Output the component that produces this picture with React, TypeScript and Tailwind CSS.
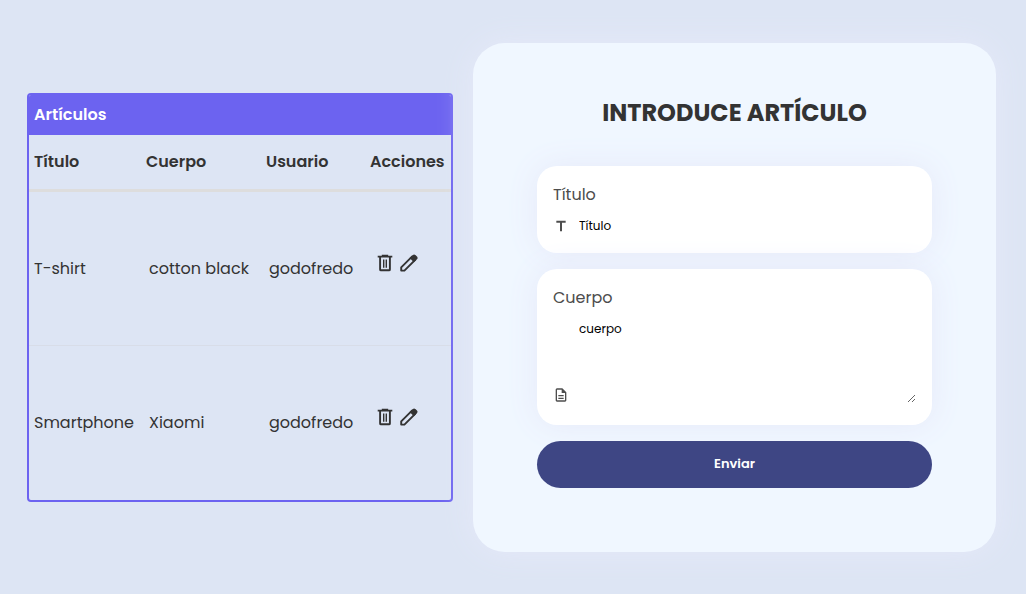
import React from 'react';

const articles = [
  { title: 'T-shirt', body: 'cotton black', user: 'godofredo' },
  { title: 'Smartphone', body: 'Xiaomi', user: 'godofredo' },
];

const icons = {
  title: 'M420-160v-520H200v-120h560v120H540v520H420Z',
  description:
    'M320-240h320v-80H320v80Zm0-160h320v-80H320v80ZM240-80q-33 0-56.5-23.5T160-160v-640q0-33 23.5-56.5T240-880h320l240 240v480q0 33-23.5 56.5T720-80H240Zm280-520v-200H240v640h480v-440H520ZM240-800v200-200 640-640Z',
};

function Icon({ name, className }: { name: keyof typeof icons; className: string }) {
  return (
    <svg viewBox="0 -960 960 960" fill="currentColor" aria-hidden="true" className={className}>
      <path d={icons[name]} />
    </svg>
  );
}

function TrashIcon() {
  return (
    <svg viewBox="0 0 24 24" fill="none" stroke="currentColor" strokeWidth="1.9" aria-hidden="true" className="size-6">
      <path d="M4.7 5.6h14.6M8.8 4.6h6.4" />
      <path d="M7.1 6v12.4q0 .9.9.9h8q.9 0 .9-.9V6" />
      <path strokeWidth="1.4" d="M10.7 8.6v8.2M13.3 8.6v8.2" />
    </svg>
  );
}

function PencilIcon() {
  return (
    <svg viewBox="0 0 24 24" fill="none" stroke="currentColor" strokeWidth="1.9" strokeLinejoin="round" aria-hidden="true" className="size-6">
      <path d="M4.2 19.6v-3.2L15 5.6l3.2 3.2L7.4 19.6z" />
      <path
        fill="currentColor"
        stroke="none"
        d="M12.6 7l3.2-3a1.9 1.9 0 0 1 2.6 0l1.6 1.6a1.9 1.9 0 0 1 0 2.6l-3.1 3.1z"
      />
    </svg>
  );
}

function ArticleTable() {
  return (
    <div className="overflow-hidden rounded border-2 border-[#6c63f0]">
      <table className="w-full table-fixed border-collapse text-left">
        <colgroup>
          <col className="w-[114px]" />
          <col className="w-[120px]" />
          <col className="w-[104px]" />
          <col />
        </colgroup>
        <thead>
          <tr className="h-10 bg-[#6c63f0] text-white">
            <th colSpan={4} className="pl-[5px] font-semibold">Artículos</th>
          </tr>
          <tr className="h-14 border-b-3 border-[#dddddd]">
            <th className="pl-[5px] font-semibold">Título</th>
            <th className="pl-[3px] font-semibold">Cuerpo</th>
            <th className="pl-[3px] font-semibold">Usuario</th>
            <th className="pl-[3px] font-semibold">Acciones</th>
          </tr>
        </thead>
        <tbody>
          {articles.map((a) => (
            <tr key={a.title} className="h-[155px] border-b border-[#d8dde8] last:h-[154px] last:border-b-0">
              <td className="pl-[5px]">{a.title}</td>
              <td className="pl-[6px]">{a.body}</td>
              <td className="pl-[6px]">{a.user}</td>
              <td className="pb-3 pl-[6px]">
                <div className="flex">
                  <button type="button" aria-label="Eliminar"><TrashIcon /></button>
                  <button type="button" aria-label="Editar"><PencilIcon /></button>
                </div>
              </td>
            </tr>
          ))}
        </tbody>
      </table>
    </div>
  );
}

function ArticleForm() {
  return (
    <form
      onSubmit={(e) => e.preventDefault()}
      className="flex flex-col gap-4 rounded-[32px] bg-[#f0f7ff] px-16 pt-[50px] pb-16 shadow-[0_0_32px_#e6e9f9]"
    >
      <h2 className="mb-[17px] text-center text-2xl leading-10 font-bold">INTRODUCE ARTÍCULO</h2>
      <div className="rounded-[20px] bg-white p-4 text-[#4d4d4d] shadow-[0_0_32px_#e6e9f9]">
        <label htmlFor="titulo" className="block leading-[26px]">Título</label>
        <div className="mt-2 flex items-center gap-[10px]">
          <Icon name="title" className="size-4 shrink-0" />
          <input
            id="titulo"
            type="text"
            placeholder="Título"
            className="h-[21px] w-full min-w-0 bg-transparent text-[12px] text-black outline-none placeholder:text-black"
          />
        </div>
      </div>
      <div className="rounded-[20px] bg-white p-4 text-[#4d4d4d] shadow-[0_0_32px_#e6e9f9]">
        <label htmlFor="cuerpo" className="block leading-[26px]">Cuerpo</label>
        <div className="mt-2 mb-[6px] flex items-end gap-[10px]">
          <Icon name="description" className="size-4 shrink-0" />
          <textarea
            id="cuerpo"
            placeholder="cuerpo"
            className="block h-[84px] w-full min-w-0 resize bg-transparent text-[12px] leading-5 text-black outline-none placeholder:text-black"
          />
        </div>
      </div>
      <button type="submit" className="h-[47px] rounded-full bg-[#3e4684] pb-px text-[13px] font-semibold text-white">
        Enviar
      </button>
    </form>
  );
}

export default function App() {
  return (
    <main className="grid min-h-screen grid-cols-[426fr_523fr] items-center gap-5 bg-[#dde5f4] pr-[30px] pl-[27px] font-[Poppins,Inter,sans-serif] text-base text-[#333333]">
      <ArticleTable />
      <ArticleForm />
    </main>
  );
}
